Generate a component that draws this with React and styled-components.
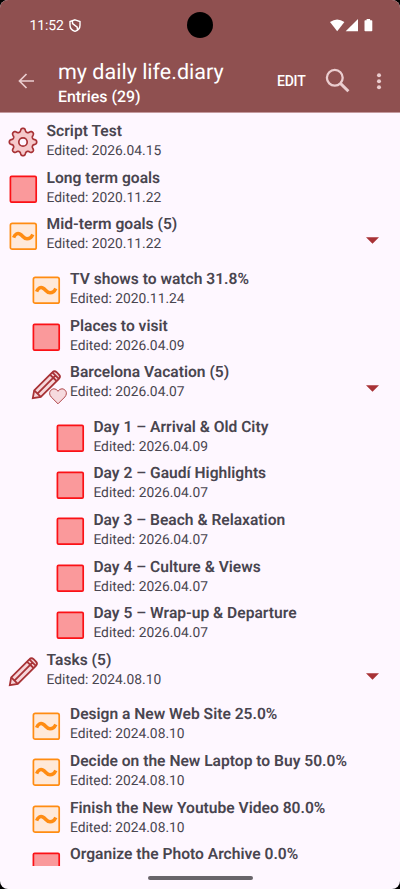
import React from 'react';
import styled, { createGlobalStyle } from 'styled-components';

const GlobalStyle = createGlobalStyle`
  * {
    box-sizing: border-box;
  }
  body {
    margin: 0;
    background: #000;
    font-family: Roboto, sans-serif;
    text-rendering: geometricPrecision;
  }
`;

const Screen = styled.div`
  width: 400px;
  height: 889px;
  display: flex;
  flex-direction: column;
  overflow: hidden;
  border-radius: 8px;
  background-color: #fef7ff;
`;

const Header = styled.header`
  height: 113px;
  flex: none;
  background-color: #8f5050;
  border-bottom: 1px solid #c49a9e;
  color: #fff;
`;

const StatusBar = styled.div`
  position: relative;
  height: 50px;
  display: flex;
  align-items: center;
  padding: 0 27px 0 29.5px;
`;

const Clock = styled.span`
  font-size: 14px;
  line-height: 16px;
  letter-spacing: -0.1px;
  padding-top: 1px;
  margin-right: 5px;
`;

const Camera = styled.div`
  position: absolute;
  left: 187px;
  top: 12px;
  width: 26px;
  height: 26px;
  border-radius: 50%;
  background-color: #000;
`;

const StatusIcons = styled.div`
  display: flex;
  margin-left: auto;
`;

const Toolbar = styled.div`
  height: 62px;
  display: flex;
  align-items: center;
  padding: 0 16.5px 0 18px;
`;

const Titles = styled.div`
  flex: 1;
  margin-left: 23px;
  padding-top: 5px;
`;

const FileName = styled.div`
  font-size: 21.5px;
  line-height: 26px;
  white-space: nowrap;
`;

const EntryCount = styled.div`
  font-size: 15.9px;
  font-weight: 500;
  line-height: 22px;
`;

const EditButton = styled.button`
  border: 0;
  padding: 0;
  margin-right: 20px;
  background: none;
  color: #fff;
  font-family: inherit;
  font-size: 14px;
  font-weight: 500;
  letter-spacing: -0.2px;
`;

const Icon = styled.svg`
  display: block;
  flex: none;
  width: ${({ $w }) => $w}px;
  height: ${({ $h, $w }) => $h || $w}px;
  overflow: visible;
`;

const List = styled.main`
  height: 753px;
  flex: none;
  padding-top: 8.1px;
  overflow: hidden;
`;

const Row = styled.div`
  position: relative;
  display: flex;
  height: ${({ $open }) => ($open ? 54.5 : 46.65)}px;
  padding-left: ${({ $level }) => 9 + $level * 23.4}px;
`;

const IconBox = styled.div`
  position: relative;
  width: 28px;
  height: 28px;
  margin: 7.4px 9.6px 0 0;
`;

const Favorite = styled(Icon)`
  position: absolute;
  left: 17px;
  top: 18px;
`;

const Texts = styled.div`
  flex: 1;
  color: #49454f;
  white-space: nowrap;
`;

const Name = styled.div`
  font-size: 15.6px;
  font-weight: 600;
  line-height: 20px;
`;

const Edited = styled.div`
  font-size: 13.8px;
  line-height: 20px;
`;

const Toggle = styled.div`
  width: 13px;
  margin: 22.8px 21px 0 0;
`;

const Footer = styled.footer`
  flex: 1;
  display: flex;
  justify-content: center;
  padding-top: 10px;
`;

const Handle = styled.div`
  width: 105px;
  height: 4px;
  border-radius: 2px;
  background-color: #68646a;
`;

const toothedRing = () => {
  const points = [];
  for (let i = 0; i <= 160; i += 1) {
    const a = (i / 160) * Math.PI * 2;
    const r = 12 + 1.9 * Math.tanh(1.4 * Math.cos(8 * a));
    points.push(`${(14 + r * Math.sin(a)).toFixed(2)} ${(14 - r * Math.cos(a)).toFixed(2)}`);
  }
  return `M${points.join('L')}Z`;
};

const GearIcon = () => (
  <Icon $w={28} viewBox="0 0 28 28" stroke="#a83236" strokeWidth="1.7">
    <path d={toothedRing()} fill="#f6c9cb" strokeLinejoin="round" />
    <circle cx="14" cy="14" r="4.2" fill="#fef7ff" />
  </Icon>
);

const TodoIcon = () => (
  <Icon $w={28} viewBox="0 0 28 28">
    <rect x="1.4" y="1.4" width="25.8" height="25.8" rx="1.2" fill="#fa999b" stroke="#fb1116" strokeWidth="1.7" />
  </Icon>
);

const ProgressIcon = () => (
  <Icon $w={28} viewBox="0 0 28 28" fill="none" stroke="#ff8c12">
    <rect x="1.4" y="1.4" width="25.8" height="25.8" rx="1.8" fill="#ffe9d9" strokeWidth="1.7" />
    <path d="M4.6 15.6C6 12.2 8.5 10.8 11 12.1C14 13.6 14.6 16.8 18 16.8C20.7 16.8 22.6 15.2 23.8 12.6" strokeWidth="3.5" />
  </Icon>
);

const PencilIcon = () => (
  <Icon $w={28} viewBox="0 0 28 28" fill="none" stroke="#a83236" strokeWidth="1.8">
    <path d="M0.8 28.2L2.2 20.4L20.3 2.4Q22.4 .2 24.6 2.2L27 4.6Q29 6.7 26.9 8.8L8.8 26.8Z" fill="#f6d6da" />
    <path d="M2.2 20.4L8.8 26.8M5.7 23.4L22.9 6.2M18.2 4.8L24.6 11M20.3 2.4L26.9 8.8" />
  </Icon>
);

const HeartIcon = () => (
  <Favorite $w={18} $h={17} viewBox="0 0 18 17">
    <path
      d="M9 15.8L2.2 9C-1.5 4.7 2.1.8 5 .8Q7.7.8 9 3.3Q10.3.8 13 .8C15.9.8 19.5 4.7 15.8 9Z"
      fill="#f6dade"
      stroke="#b0464a"
      strokeWidth="1"
    />
  </Favorite>
);

const icons = {
  gear: GearIcon,
  todo: TodoIcon,
  progress: ProgressIcon,
  pencil: PencilIcon,
};

const entries = [
  { name: 'Script Test', date: '2026.04.15', icon: 'gear', level: 0 },
  { name: 'Long term goals', date: '2020.11.22', icon: 'todo', level: 0 },
  { name: 'Mid-term goals (5)', date: '2020.11.22', icon: 'progress', level: 0, open: true },
  { name: 'TV shows to watch 31.8%', date: '2020.11.24', icon: 'progress', level: 1 },
  { name: 'Places to visit', date: '2026.04.09', icon: 'todo', level: 1 },
  { name: 'Barcelona Vacation (5)', date: '2026.04.07', icon: 'pencil', level: 1, open: true, favorite: true },
  { name: 'Day 1 – Arrival & Old City', date: '2026.04.09', icon: 'todo', level: 2 },
  { name: 'Day 2 – Gaudí Highlights', date: '2026.04.07', icon: 'todo', level: 2 },
  { name: 'Day 3 – Beach & Relaxation', date: '2026.04.07', icon: 'todo', level: 2 },
  { name: 'Day 4 – Culture & Views', date: '2026.04.07', icon: 'todo', level: 2 },
  { name: 'Day 5 – Wrap-up & Departure', date: '2026.04.07', icon: 'todo', level: 2 },
  { name: 'Tasks (5)', date: '2024.08.10', icon: 'pencil', level: 0, open: true },
  { name: 'Design a New Web Site 25.0%', date: '2024.08.10', icon: 'progress', level: 1 },
  { name: 'Decide on the New Laptop to Buy 50.0%', date: '2024.08.10', icon: 'progress', level: 1 },
  { name: 'Finish the New Youtube Video 80.0%', date: '2024.08.10', icon: 'progress', level: 1 },
  { name: 'Organize the Photo Archive 0.0%', icon: 'todo', level: 1 },
];

const Entry = ({ entry }) => {
  const EntryIcon = icons[entry.icon];
  return (
    <Row $level={entry.level} $open={entry.open}>
      <IconBox>
        <EntryIcon />
        {entry.favorite && <HeartIcon />}
      </IconBox>
      <Texts>
        <Name>{entry.name}</Name>
        {entry.date && <Edited>Edited: {entry.date}</Edited>}
      </Texts>
      {entry.open && (
        <Toggle>
          <Icon $w={13} $h={7} viewBox="0 0 13 7">
            <path d="M0 0.3H13L6.5 6.8Z" fill="#a83236" />
          </Icon>
        </Toggle>
      )}
    </Row>
  );
};

const App = () => (
  <>
    <GlobalStyle />
    <Screen>
      <Header>
        <StatusBar>
          <Clock>11:52</Clock>
          <Icon $w={12} $h={13} viewBox="0 0 12 13" fill="none" stroke="#fff" strokeWidth="1.4">
            <path d="M6 .8L11 2.6V6.2C11 9.2 8.8 11.4 6 12.3C3.2 11.4 1 9.2 1 6.2V2.6ZM3.4 2.2L3.6 4.6L8.2 8.2L8.4 11" />
          </Icon>
          <Camera />
          <StatusIcons>
            <Icon $w={43} $h={13} viewBox="0 0 43 13" fill="#fff">
              <path d="M0 3Q7.2 -2 14.4 3L7.2 12.2Z" />
              <path d="M28 0V12.3H15.7Z" />
              <path d="M34.5 2Q34.5 1.2 35.3 1.2H36.6V0H40.1V1.2H41.5Q42.3 1.2 42.3 2V11.5Q42.3 12.3 41.5 12.3H35.3Q34.5 12.3 34.5 11.5Z" />
            </Icon>
          </StatusIcons>
        </StatusBar>
        <Toolbar>
          <Icon $w={17} $h={16} viewBox="0 0 17 16" fill="none" stroke="#ebcdcf" strokeWidth="1.7">
            <path d="M16 8H2M8.5 1L1.5 8L8.5 15" />
          </Icon>
          <Titles>
            <FileName>my daily life.diary</FileName>
            <EntryCount>Entries (29)</EntryCount>
          </Titles>
          <EditButton>EDIT</EditButton>
          <Icon $w={24} viewBox="0 0 24 24" fill="none" stroke="#ebcdcf" strokeWidth="2.3">
            <circle cx="8.8" cy="8.8" r="7.9" />
            <path d="M14.4 14.4L22.4 22.2" strokeWidth="3" />
          </Icon>
          <Icon $w={34} $h={16} viewBox="0 0 34 16" fill="#ebcdcf">
            <circle cx="29" cy="2.2" r="2" />
            <circle cx="29" cy="8.2" r="2" />
            <circle cx="29" cy="14.2" r="2" />
          </Icon>
        </Toolbar>
      </Header>
      <List>
        {entries.map(entry => (
          <Entry key={entry.name} entry={entry} />
        ))}
      </List>
      <Footer>
        <Handle />
      </Footer>
    </Screen>
  </>
);

export default App;
